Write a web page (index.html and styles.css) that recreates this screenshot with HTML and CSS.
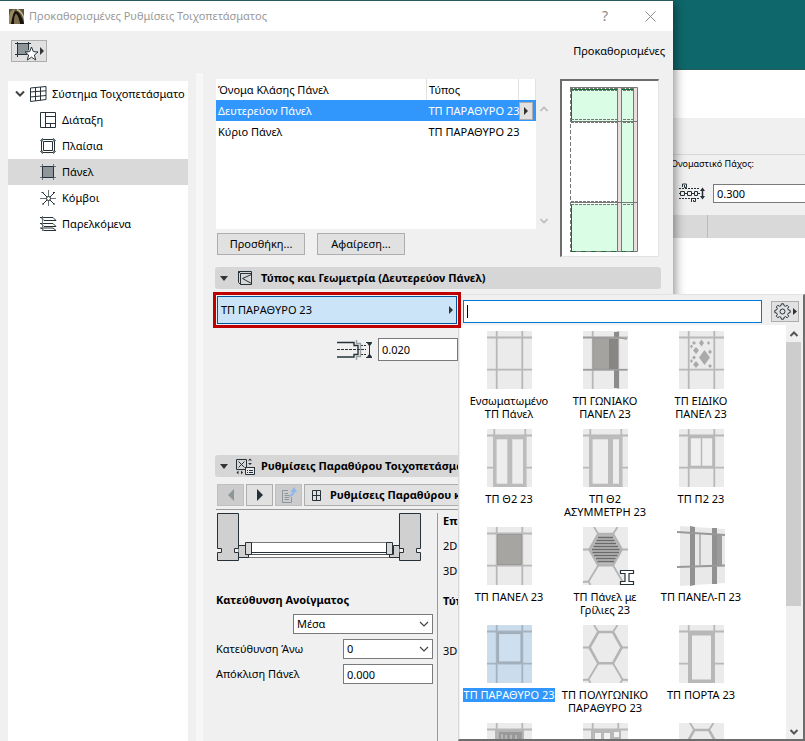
FILE: index.html
```html
<!DOCTYPE html>
<html lang="el">
<head>
<meta charset="utf-8">
<title>Προκαθορισμένες Ρυθμίσεις Τοιχοπετάσματος</title>
<link rel="stylesheet" href="styles.css">
</head>
<body>
<svg class="defs" aria-hidden="true">
  <defs>
    <g id="cell">
      <rect width="45" height="58" fill="#ebebeb"/>
      <path d="M9.7 0V58M35.3 0V58M0 6.5H45M0 38.7H45" stroke="#b8b8b8" stroke-width="1.8"/>
    </g>
    <g id="hex-lines" fill="none" stroke="#b4b4b4" stroke-width="1.8">
      <path d="M11 0L15.3 7M34.5 0L30 7M0 22.5H6.5M38.7 22.5H45M15.3 38.3L5.5 54.5L7.5 58M0 55L5.5 54.5M30 38.3L39.5 54.5L37.5 58M45 55L39.5 54.5"/>
      <path d="M15.3 7H30L38.7 22.5L30 38.3H15.3L6.5 22.5Z" stroke-width="2.6"/>
    </g>
    <g id="door-lines">
      <rect width="45" height="58" fill="#ebebeb"/>
      <path d="M0 6.5H45M0 38.7H6M39 38.7H45M7.3 0V7M38.3 0V7" stroke="#b8b8b8" stroke-width="1.8"/>
      <rect x="7.8" y="8.5" width="30" height="48" fill="#ededed" stroke="#bcbcbc" stroke-width="3.6"/>
    </g>
  </defs>
</svg>

<div class="workspace">
  <header class="app-bar"></header>
  <div class="app-blank"></div>
  <section class="app-info">
    <div class="app-info-top"></div>
    <div class="thickness">
      <label for="thickness">Ονομαστικό Πάχος:</label>
      <div class="thickness-row">
        <svg width="28" height="20" viewBox="0 0 28 20" fill="none" stroke="#263238"><path d="M0 5.5H20M0 15.5H20" stroke-dasharray="2 1"/><path d="M0 10.5H2M6 10.5H9M12 10.5H15M18 10.5H21M3.500 4V1H7.500V4.500H5.500V2M12.500 19V15.500H16.500V18.500H14.500V17"/><path d="M1.500 8.500H5.500V12.500H1.500ZM8.500 8.500H12.500V12.500H8.500ZM15.500 8.500H18.500V12.500H15.500Z"/><path d="M23.500 6V15" stroke-width="1.5"/><path d="M21 8L23.500 4.500L26 8ZM21 13L23.500 16.500L26 13Z" fill="#263238" stroke="none"/></svg>
        <input id="thickness" class="field" value="0.300">
      </div>
    </div>
  </section>
  <div class="app-strip"><span></span><span></span></div>
</div>

<main class="dialog">
  <div class="titlebar">
    <svg width="15" height="15" viewBox="0 0 15 15"><rect width="15" height="15" fill="#5d523a"/><path d="M0 15V7Q1 1 6 0L2 15Z" fill="#978862"/><path d="M2 15Q4 2 7 2Q12 4 15 15H11Q9 5 7 5Q5 6 5 15Z" fill="#17130c"/><path d="M7 1Q13 3 15 12V7Q12 1 9 0Z" fill="#c7b992"/><path d="M5 15Q5 6 7 5Q9 5 11 15Z" fill="#7b6d4e"/></svg>
    <h1>Προκαθορισμένες Ρυθμίσεις Τοιχοπετάσματος</h1>
    <button class="plain help" aria-label="Βοήθεια">?</button>
    <button class="plain close" aria-label="Κλείσιμο"><svg width="11" height="11" viewBox="0 0 11 11"><path d="M.5.5L10.500 10.500M10.500.5L.5 10.500" stroke="#8a8a8a"/></svg></button>
  </div>
  <div class="toolbar">
    <button class="btn favorites" aria-label="Αγαπημένα">
      <svg width="30" height="20" viewBox="0 0 30 20"><path d="M3.500 2.500H14.500V13.500H3.500Z" fill="#8f9699"/><path d="M1 2.500H17M3.500 1V16M1 13.500H13M14.500 1V9" stroke="#263238" fill="none"/><path d="M17.500 6L19.300 10.600L24 11L20.400 14L21.700 19L17.500 16.200L13.300 19L14.600 14L11 11L15.700 10.600Z" fill="#fff" stroke="#263238"/><path d="M26 6L30 10L26 14Z" fill="#333"/></svg>
    </button>
    <span>Προκαθορισμένες</span>
  </div>
  <div class="dialog-body">
    <nav class="tree">
      <a class="node root" href="#">
        <svg width="10" height="8" viewBox="0 0 10 8"><path d="M1 1.500L5 5.500L9 1.500" fill="none" stroke="#444" stroke-width="2"/></svg>
        <svg width="17" height="16" viewBox="0 0 17 16" fill="none" stroke="#263238"><path d="M.5 2L16 .5V13.500L.5 15.500ZM5.500 1.500V15M10.500 1V14.500M0 6L16 4.800M0 11L16 9.500"/></svg>
        <span>Σύστημα Τοιχοπετάσματο</span>
      </a>
      <a class="node" href="#"><svg width="17" height="16" viewBox="0 0 17 16" fill="none" stroke="#263238"><path d="M.5.5H15.500V15.500H.5ZM5.500 .5V15.500M5.500 4.500H15.500M5.500 11.500H15.500M10.500 11.500V15.500"/></svg><span>Διάταξη</span></a>
      <a class="node" href="#"><svg width="17" height="16" viewBox="0 0 17 16" fill="none" stroke="#263238"><path d="M1.500 1.500H14.500V14.500H1.500ZM3.500 3.500H12.500V12.500H3.500Z"/><path d="M0 2.500H2M14 2.500H16M0 13.500H2M14 13.500H16M2.500 0V3.500M13.500 0V3.500M2.500 12.500V16M13.500 12.500V16" stroke="#6c7579"/></svg><span>Πλαίσια</span></a>
      <a class="node current" href="#"><svg width="17" height="16" viewBox="0 0 17 16"><path d="M0 2.500H16M0 13.500H16M2.500 0V16M13.500 0V16" stroke="#6c7579"/><path d="M2.500 2.500H13.500V13.500H2.500Z" fill="#8f9699" stroke="#263238"/></svg><span>Πάνελ</span></a>
      <a class="node" href="#"><svg width="17" height="16" viewBox="0 0 17 16" fill="none" stroke="#263238"><path d="M0 8.500H16M8.500 0V16" stroke="#6c7579"/><path d="M3 3L14 14M14 3L3 14"/><path d="M1.500 2.500H3.500M13 2.500H15M2 14H4M13 14H15"/><circle cx="8.500" cy="8.500" r="2" fill="#fff"/></svg><span>Κόμβοι</span></a>
      <a class="node" href="#"><svg width="17" height="16" viewBox="0 0 17 16" fill="none" stroke="#263238"><path d="M0 1.500H13L16 4.500H4L1 1.500M0 7.500H13L16 10.500H4L1 7.500M0 12H13L16 14.500H4L1 12"/><path d="M2.500 0V15" stroke="#6c7579"/></svg><span>Παρελκόμενα</span></a>
    </nav>
    <div class="splitter"></div>
    <div class="settings">
      <section class="classes">
        <div class="list-side">
          <div class="list-wrap">
            <div class="list-box">
              <table>
                <thead><tr><th class="c-name">Όνομα Κλάσης Πάνελ</th><th class="c-type">Τύπος</th><th class="c-pop"></th></tr></thead>
                <tbody>
                  <tr class="selected"><td>Δευτερεύον Πάνελ</td><td>ΤΠ ΠΑΡΑΘΥΡΟ 23</td><td class="pop"><button class="btn" aria-label="Επιλογή τύπου"><svg width="4" height="8" viewBox="0 0 4 8"><path d="M0 0L4 4L0 8Z" fill="#333"/></svg></button></td></tr>
                  <tr><td>Κύριο Πάνελ</td><td>ΤΠ ΠΑΡΑΘΥΡΟ 23</td><td></td></tr>
                </tbody>
              </table>
            </div>
            <div class="list-scroll">
              <svg width="8" height="6" viewBox="0 0 8 6"><path d="M.5 5L4 1.500L7.500 5" fill="none" stroke="#bbb" stroke-width="1.600"/></svg>
              <svg width="8" height="6" viewBox="0 0 8 6"><path d="M.5 1L4 4.500L7.500 1" fill="none" stroke="#bbb" stroke-width="1.600"/></svg>
            </div>
          </div>
          <div class="list-actions">
            <button class="btn">Προσθήκη...</button>
            <button class="btn">Αφαίρεση...</button>
          </div>
        </div>
        <div class="preview">
          <svg width="68" height="165" viewBox="0 0 68 165">
            <path d="M1 2H47V34H1ZM52 2H64V116H52ZM1 117H47V164H1ZM52 116H64V164H52Z" fill="#dafde5"/>
            <path d="M1.500 2.500V34M1.500 117V164M1 2.500H47M52 2.500H63" stroke="#16732f"/>
            <path d="M1 34.500H64M52 115.500H64" stroke="#16732f" stroke-dasharray="5 3" fill="none"/>
            <path d="M.5 1V165" stroke="#777" stroke-dasharray="4 2"/>
            <path d="M0 1.500H64M1 3.500H64M1 32.500H64M1 35.500H64M1 114.500H47M1 117.500H64" fill="none" stroke="#777" stroke-dasharray="3 1"/>
            <path d="M0 .5H67M0 34.500H67M0 115.500H67M0 164.500H67" stroke="#777"/>
            <path d="M1 164.500H64" stroke="#16732f" stroke-dasharray="5 5"/>
            <path d="M47.500 .5H51.500V164.500H47.500ZM63.500 .5H67.500V164.500H63.500Z" fill="#e9dfdf" stroke="#777"/>
            <path d="M47 34.500H52M63 34.500H68M47 115.500H52M63 115.500H68" stroke="#777"/>
          </svg>
        </div>
      </section>

      <h2 class="section-bar">
        <svg width="8" height="5" viewBox="0 0 8 5"><path d="M0 0H8L4 5Z" fill="#333"/></svg>
        <svg class="sec-icon" width="15" height="15" viewBox="0 0 15 15" fill="none" stroke="#263238"><path d="M.5 .5H13.500V13.500H2.500L.5 11.500ZM2.500 2.500V13.500M2.500 2.500H13.500M.5 .5L2.500 2.500M13.500 3.500L4.500 7.500L13.500 12.500"/></svg>
        <span>Τύπος και Γεωμετρία (Δευτερεύον Πάνελ)</span>
      </h2>

      <div class="type-frame">
        <button class="type-button"><span>ΤΠ ΠΑΡΑΘΥΡΟ 23</span><svg width="4" height="8" viewBox="0 0 4 8"><path d="M0 0L4 4L0 8Z" fill="#333"/></svg></button>
      </div>

      <div class="depth-row">
        <svg width="36" height="20" viewBox="0 0 36 20" fill="none" stroke="#263238"><path d="M1 2.500H18V5.500H22V14.500H18V17H1" stroke-width="1.400"/><path d="M1 9.500H30M24 5.500H30M24 14.500H30" stroke-dasharray="3 1"/><path d="M20.500 0V3.500H24.500V16.500H20.500V20" stroke="#9a9fa2" stroke-width="1.400"/><path d="M30 2.500H36M30 17.500H36M33.500 5V15"/><path d="M31 3H36L33.500 6.500ZM31 17H36L33.500 13.500Z" fill="#263238" stroke="none"/></svg>
        <input class="field" aria-label="Πάχος πάνελ" value="0.020">
      </div>

      <h2 class="section-bar">
        <svg width="8" height="5" viewBox="0 0 8 5"><path d="M0 0H8L4 5Z" fill="#333"/></svg>
        <svg class="sec-icon wide" width="19" height="17" viewBox="0 0 19 17" fill="none" stroke="#263238"><path d="M.5 1.500H10.500V11.500H.5ZM2.500 3.500L8.500 9.500M8.500 3.500L2.500 9.500"/><path d="M12 2.500L14 .5L16 2.500ZM12 5L14 7L16 5ZM2.500 12.500L.5 14.500L2.500 16.500ZM5 12.500L7 14.500L5 16.500Z" fill="#263238" stroke="none"/><path d="M9.500 9.500H18.500V16.500H9.500Z" fill="#e8e8e8"/><path d="M9 9.500H19M11 12.500H12M13 12.500H17M11 14.500H12M13 14.500H17"/></svg>
        <span>Ρυθμίσεις Παραθύρου Τοιχοπετάσμα</span>
      </h2>

      <div class="page-nav">
        <button class="btn off" disabled aria-label="Προηγούμενο"><svg width="6" height="12" viewBox="0 0 6 12"><path d="M6 0V12L0 6Z" fill="#8f9699"/></svg></button>
        <button class="btn" aria-label="Επόμενο"><svg width="6" height="12" viewBox="0 0 6 12"><path d="M0 0V12L6 6Z" fill="#263238"/></svg></button>
        <button class="btn off" disabled aria-label="Επάνω"><svg width="18" height="16" viewBox="0 0 18 16" fill="none"><path d="M8 3.500H2.500V15.500H11.500V10M4.500 6.500H8M4.500 8.500H9M4.500 10.500H9M4.500 12.500H9" stroke="#8f9699"/><path d="M9 9Q14 8 14 3" stroke="#8fb4ee" stroke-width="2"/><path d="M10.500 5L14 0L17 5Z" fill="#8fb4ee"/></svg></button>
        <button class="btn page-name"><svg width="9" height="11" viewBox="0 0 9 11" fill="none" stroke="#263238"><path d="M.5.5H8.500V10.500H.5ZM4.500.5V10.500M.5 5.500H8.500"/></svg><span>Ρυθμίσεις Παραθύρου κ</span></button>
      </div>

      <div class="page">
        <div class="page-left">
          <svg class="plan" width="205" height="49" viewBox="0 0 205 49" stroke="#263238">
            <path d="M30 29.500H174V44.500H30Z" fill="#fff" stroke="#777"/>
            <path d="M34 39.500H170"/><path d="M32 41.500H172" stroke="#555"/>
            <path d="M21.500 32.500H28.500V41.500H31.500V44.500H21.500ZM182.500 32.500H176.500V41.500H172.500V44.500H182.500Z" fill="#d0d0d0"/>
            <path d="M28.500 29.500H34.500V41.500H28.500ZM169.500 29.500H175.500V41.500H169.500Z" fill="#d8d8d8"/>
            <path d="M.5 .5H21.500V47.500H.5V39.500H4.500V35.500H.5Z" fill="#d0d0d0"/>
            <path d="M21.500 35.500H17.500V39.500H21.500" fill="#f0f0f0"/>
            <path d="M182.500 .5H203.500V35.500H199.500V39.500H203.500V47.500H182.500Z" fill="#d0d0d0"/>
            <path d="M182.500 35.500H186.500V39.500H182.500" fill="#f0f0f0"/>
          </svg>
          <h3>Κατεύθυνση Ανοίγματος</h3>
          <div class="form-row opening">
            <div class="select"><select aria-label="Κατεύθυνση Ανοίγματος"><option>Μέσα</option></select><svg width="10" height="6" viewBox="0 0 10 6"><path d="M1 1L5 5L9 1" fill="none" stroke="#444" stroke-width="1.200"/></svg></div>
          </div>
          <div class="form-row">
            <label for="up">Κατεύθυνση Άνω</label>
            <div class="select"><select id="up"><option>0</option></select><svg width="10" height="6" viewBox="0 0 10 6"><path d="M1 1L5 5L9 1" fill="none" stroke="#444" stroke-width="1.200"/></svg></div>
          </div>
          <div class="form-row">
            <label for="offset">Απόκλιση Πάνελ</label>
            <input id="offset" class="field" value="0.000">
          </div>
        </div>
        <div class="page-right">
          <h3>Επι</h3>
          <p>2D</p>
          <p>3D</p>
          <h3>Τύπ</h3>
          <p>3D</p>
        </div>
      </div>
    </div>
  </div>
</main>

<aside class="picker">
  <div class="picker-head">
    <div class="search"><input aria-label="Αναζήτηση" value=""><i></i></div>
    <button class="btn gear" aria-label="Ρυθμίσεις"><svg width="23" height="17" viewBox="0 0 23 17" fill="none" stroke="#263238"><circle cx="8.500" cy="8.500" r="2.500"/><path d="M7 2.600L7.400.8H9.600L10 2.600L11.600 3.300L13.200 2.300L14.700 3.800L13.700 5.400L14.400 7L16.200 7.400V9.600L14.400 10L13.700 11.600L14.700 13.200L13.200 14.700L11.600 13.700L10 14.400L9.600 16.200H7.400L7 14.400L5.400 13.700L3.800 14.700L2.300 13.200L3.300 11.600L2.600 10L.8 9.600V7.400L2.600 7L3.300 5.400L2.300 3.800L3.800 2.300L5.400 3.300Z"/><path d="M19 5L23 8.500L19 12Z" fill="#333" stroke="none"/></svg></button>
  </div>
  <div class="picker-body">
    <ul class="grid">
      <li><a href="#"><span class="pic"><svg width="45" height="58" viewBox="0 0 45 58"><use href="#cell"/></svg></span><b>Ενσωματωμένο ΤΠ Πάνελ</b></a></li>
      <li><a href="#"><span class="pic"><svg width="45" height="58" viewBox="0 0 45 58"><use href="#cell"/><path d="M31 1H36V6H31ZM31 39H36V57H31Z" fill="#8b8b8b"/><path d="M10 7H35V38H10Z" fill="#a4a3a0" stroke="#999"/><path d="M26 8H35V38H26Z" fill="#878684"/><path d="M0 6.500H35L44 8M0 38.700H44" stroke="#9c9c9c" stroke-width="1.600" fill="none"/></svg></span><b>ΤΠ ΓΩΝΙΑΚΟ ΠΑΝΕΛ 23</b></a></li>
      <li><a href="#"><span class="pic"><svg width="45" height="58" viewBox="0 0 45 58"><use href="#cell"/><path d="M25.500 19L31 26.500L25.500 34L20 26.500ZM22.500 8.500L25 12L22.500 15.500L20 12ZM17 16L20 19.500L17 23L14 19.500ZM17 30L20 33.500L17 37L14 33.500ZM15 10L17 12L15 14L13 12ZM29.500 10L31 12L29.500 14L28 12ZM31 18.500L33 21L31 23L29 21ZM12.500 13.500L14 15.500L12.500 17.500L11 15.500ZM15 24.500L17 26.500L15 28.500L13 26.500ZM12.500 28L14 30L12.500 32L11 30ZM31 33L33 35L31 37L29 35Z" fill="#aaa"/></svg></span><b>ΤΠ ΕΙΔΙΚΟ ΠΑΝΕΛ 23</b></a></li>
      <li><a href="#"><span class="pic"><svg width="45" height="58" viewBox="0 0 45 58"><use href="#door-lines"/><path d="M20.300 8H25.300V56H20.300Z" fill="#bcbcbc"/></svg></span><b>ΤΠ Θ2 23</b></a></li>
      <li><a href="#"><span class="pic"><svg width="45" height="58" viewBox="0 0 45 58"><use href="#door-lines"/><path d="M25 8H30V56H25Z" fill="#bcbcbc"/></svg></span><b>ΤΠ Θ2 ΑΣΥΜΜΕΤΡΗ 23</b></a></li>
      <li><a href="#"><span class="pic"><svg width="45" height="58" viewBox="0 0 45 58"><use href="#cell"/><rect x="10.500" y="8" width="24" height="30" fill="#efefef" stroke="#b8b8b8" stroke-width="2.600"/><path d="M22.500 8V38" stroke="#b8b8b8" stroke-width="1.500"/></svg></span><b>ΤΠ Π2 23</b></a></li>
      <li><a href="#"><span class="pic"><svg width="45" height="58" viewBox="0 0 45 58"><use href="#cell"/><rect x="10.500" y="7.500" width="24" height="30" fill="#a6a5a2" stroke="#999"/></svg></span><b>ΤΠ ΠΑΝΕΛ 23</b></a></li>
      <li><a href="#"><span class="pic"><svg width="45" height="58" viewBox="0 0 45 58"><rect width="45" height="58" fill="#ebebeb"/><path d="M15.300 7H30L38.700 22.500L30 38.300H15.300L6.500 22.500Z" fill="#bdbdbd"/><use href="#hex-lines"/><path d="M15 10.500H30M13.500 13.500H31.500M12 16.500H33M10.500 19.500H35M9 22.500H36.500M9.500 25.500H36M11 28.500H34.500M13 31.500H32.500M14.500 34.500H31" stroke="#6a6a6a" stroke-width="1.400"/></svg><svg class="beam" width="16" height="17" viewBox="0 0 16 17"><path d="M1.500 1.500H14.500V4.500H10V12.500H14.500V15.500H1.500V12.500H6V4.500H1.500Z" fill="#fff" stroke="#263238" stroke-width="1.200"/></svg></span><b>ΤΠ Πάνελ με Γρίλιες 23</b></a></li>
      <li><a href="#"><span class="pic"><svg width="49" height="60" viewBox="0 0 49 60"><path d="M3 0L48 3V57L3 60Z" fill="#e9e9e9"/><path d="M13 0L18 1V59L13 60ZM35 2H40V58H35Z" fill="#919191"/><path d="M40 9H45V39H40Z" fill="#9c9c9c"/><path d="M23 8V39" stroke="#aaa" stroke-width="1.500"/><path d="M0 6L48 9M0 41L48 39.500" stroke="#999" stroke-width="2"/></svg></span><b>ΤΠ ΠΑΝΕΛ-Π 23</b></a></li>
      <li class="chosen"><a href="#"><span class="pic"><svg width="45" height="58" viewBox="0 0 45 58"><rect width="45" height="58" fill="#cbdcec"/><path d="M9.700 0V58M35.300 0V58M0 6.500H45M0 38.700H45" stroke="#a5b3c0" stroke-width="1.800"/><rect x="11" y="8" width="23.500" height="29.500" fill="#cedff0" stroke="#a2afbb" stroke-width="2.200"/></svg></span><b>ΤΠ ΠΑΡΑΘΥΡΟ 23</b></a></li>
      <li><a href="#"><span class="pic"><svg width="45" height="58" viewBox="0 0 45 58"><rect width="45" height="58" fill="#ebebeb"/><use href="#hex-lines"/></svg></span><b>ΤΠ ΠΟΛΥΓΩΝΙΚΟ ΠΑΡΑΘΥΡΟ 23</b></a></li>
      <li><a href="#"><span class="pic"><svg width="45" height="58" viewBox="0 0 45 58"><rect width="45" height="58" fill="#ebebeb"/><path d="M0 6.500H45M0 38.700H10M35 38.700H45M9.700 0V7M35.300 0V7" stroke="#b8b8b8" stroke-width="1.800"/><rect x="11" y="8.500" width="23" height="48" fill="#eee" stroke="#b8b8b8" stroke-width="4"/></svg></span><b>ΤΠ ΠΟΡΤΑ 23</b></a></li>
      <li><a href="#"><span class="pic"><svg width="45" height="58" viewBox="0 0 45 58"><use href="#cell"/><path d="M8 7H37V50H8Z" fill="#b5b5b5"/><path d="M12 9H35V50H12Z" fill="#999"/><path d="M15 11V50M19 12V50M24 12V50M29 12V50" stroke="#c0c0c0" stroke-width="1.500"/></svg></span></a></li>
      <li><a href="#"><span class="pic"><svg width="45" height="58" viewBox="0 0 45 58"><use href="#cell"/><path d="M8 7H38V50H8Z" fill="#b8b8b8"/><path d="M12 10H18V50H12ZM21 10H27V50H21ZM31 9H36V14H31Z" fill="#f2f2f2"/></svg></span></a></li>
      <li><a href="#"><span class="pic"><svg width="45" height="58" viewBox="0 0 45 58"><rect width="45" height="58" fill="#ebebeb"/><use href="#hex-lines"/></svg></span></a></li>
    </ul>
    <div class="scrollbar">
      <svg width="10" height="8" viewBox="0 0 10 8"><path d="M1.500 6L5 2.500L8.500 6" fill="none" stroke="#555" stroke-width="2"/></svg>
      <div class="track"><div class="thumb"></div></div>
      <svg width="10" height="8" viewBox="0 0 10 8"><path d="M1.500 2L5 5.500L8.500 2" fill="none" stroke="#555" stroke-width="2"/></svg>
    </div>
  </div>
</aside>
</body>
</html>
```

FILE: styles.css
```css
* { box-sizing: border-box; }

body {
  margin: 0;
  min-height: 100vh;
  position: relative;
  overflow: hidden;
  background: #fff;
  color: #000;
  font: 11px/16px "Noto Sans", "Open Sans", sans-serif;
}

h1, h2, h3, p, ul { margin: 0; padding: 0; font-size: inherit; }
button, input, select { font: inherit; color: inherit; margin: 0; padding: 0; border-radius: 0; }
a { color: inherit; text-decoration: none; }
svg { display: block; flex: none; }
.defs { position: absolute; width: 0; height: 0; }

.btn {
  display: flex;
  align-items: center;
  justify-content: center;
  background: #e1e1e1;
  border: 1px solid #adadad;
}
.field {
  background: #fff;
  border: 1px solid #7a7a7a;
  padding: 0 3px;
  min-width: 0;
}

/* Application window behind the dialog */
.app-bar { height: 70px; background: #0e686b; border-bottom: 1px solid #28595a; }
.app-blank { height: 48px; }
.app-info { height: 97px; background: #f0f0f0; }
.app-info-top { height: 37px; border-bottom: 1px solid #d8d8d8; }
.thickness { width: 134px; margin-left: auto; padding-top: 2px; font-size: 9px; }
.thickness label { display: block; line-height: 14px; white-space: nowrap; }
.thickness-row { display: flex; align-items: center; gap: 6px; padding: 12px 0 0 8px; font-size: 11px; }
.thickness-row .field { flex: 1; height: 19px; border-right: 0; }
.app-strip { display: flex; height: 23px; background: #d9d9d9; }
.app-strip span:first-child { flex: 1; border-right: 1px solid #bbb; }
.app-strip span:last-child { width: 97px; }

/* Dialog window */
.dialog {
  position: absolute;
  inset: 0 132px 0 0;
  display: flex;
  flex-direction: column;
  background: #f0f0f0;
  border-top: 1px solid #28595a;
  box-shadow: 2px 2px 10px rgba(0, 0, 0, .45);
}
.titlebar {
  display: flex;
  align-items: center;
  height: 30px;
  padding: 0 17px 0 9px;
  background: #fff;
  color: #999;
}
.titlebar h1 { flex: 1; margin-left: 5px; font-weight: 400; white-space: nowrap; }
.plain { border: 0; background: none; color: #888; }
.help { width: 12px; margin-right: 34px; font-size: 14px; }
.toolbar { display: flex; justify-content: space-between; align-items: center; height: 40px; margin-bottom: 2px; padding: 0 8px 0 11px; }
.favorites { width: 36px; height: 22px; }

.dialog-body { display: flex; flex: 1; min-height: 0; }
.tree { width: 180px; margin: 8px 8px 0; background: #fff; overflow: hidden; }
.node { display: flex; align-items: center; gap: 5px; height: 26px; padding-left: 32px; white-space: nowrap; }
.node.root { padding-left: 7px; }
.node.current { background: #d9d9d9; }
.splitter { width: 7px; background: #f7f7f7; }
.settings { flex: 1; min-width: 0; padding: 6px 12px 0; }

.classes { display: flex; }
.list-side { flex: 1; min-width: 0; padding-left: 1px; }
.list-wrap { display: flex; height: 150px; }
.list-box { flex: 1; background: #fff; }
table { width: 100%; border-collapse: collapse; table-layout: fixed; }
tr { height: 21px; }
th, td { padding: 0 0 0 2px; text-align: left; font-weight: 400; white-space: nowrap; line-height: 16px; }
th { border-right: 1px solid #e2e2e2; }
.c-type { width: 92px; }
.c-pop { width: 17px; }
.selected { background: #3297fd; color: #fff; }
.pop { padding: 0; }
.pop .btn { width: 14px; height: 18px; }
.list-scroll { display: flex; flex-direction: column; justify-content: space-between; width: 18px; padding: 27px 3px 5px 4px; }
.list-actions { display: flex; gap: 12px; padding: 4px 1px; }
.list-actions .btn { width: 88px; height: 22px; }
.preview {
  width: 99px;
  height: 178px;
  margin-right: 2px;
  margin-left: 6px;
  padding: 6px 0 0 8px;
  background: #fff;
  border: solid;
  border-width: 2px 1px 1px 2px;
  border-color: #6d6d6d #e3e3e3 #e3e3e3 #6d6d6d;
}

.section-bar {
  display: flex;
  align-items: center;
  height: 22px;
  margin-top: 8px;
  padding-left: 5px;
  background: #d6d6d6;
  border-radius: 3px;
  white-space: nowrap;
}
.sec-icon { margin: 0 8px 0 10px; }
.sec-icon.wide { margin: 0 6px 0 8px; }

.type-frame {
  position: relative;
  z-index: 3;
  width: 248px;
  margin: 3px 0 0 -2px;
  padding: 1px;
  background: #f0f0f0;
  border: 3px solid #c00000;
}
.type-button {
  display: flex;
  align-items: center;
  justify-content: space-between;
  width: 100%;
  height: 28px;
  padding: 0 3px;
  background: #cce4f7;
  border: 1px solid #00549a;
}
.depth-row { display: flex; align-items: center; gap: 6px; height: 23px; margin: 10px 0 94px; padding-left: 121px; }
.depth-row .field { width: 80px; height: 23px; }

.page-nav { display: flex; gap: 2px; margin: 7px 0 0 1px; padding: 0 0 3px 1px; border-bottom: 1px solid #999; }
.page-nav .btn { width: 27px; height: 22px; }
.page-nav .off { background: #ccc; border-color: #bfbfbf; }
.page-nav .page-name { flex: 1; justify-content: flex-start; gap: 9px; padding-left: 7px; font-weight: 700; white-space: nowrap; }

.page { display: flex; padding: 3px 0 0 1px; }
.page-left { width: 221px; }
.plan { margin: 0 0 30px 1px; }
.page-left h3 { line-height: 16px; margin-bottom: 6px; }
.form-row { display: flex; align-items: center; justify-content: space-between; height: 20px; margin: 0 4px 5px 0; }
.form-row .field, .select { width: 90px; height: 20px; }
.opening { justify-content: flex-end; }
.opening .select { width: 140px; }
.select { position: relative; }
.select select { appearance: none; width: 100%; height: 100%; padding: 0 3px; background: #fff; border: 1px solid #7a7a7a; }
.select svg { position: absolute; right: 4px; top: 7px; pointer-events: none; }
.page-right { flex: 1; height: 230px; padding-left: 5px; border-left: 1px solid #999; }
.page-right h3, .page-right p { height: 25px; line-height: 15px; }
.page-right h3:nth-of-type(2) { margin-top: 5px; height: 50px; }

/* Object picker menu */
.picker {
  position: absolute;
  z-index: 2;
  inset: 294px 0 0 auto;
  width: 347px;
  display: flex;
  flex-direction: column;
  background: #f0f0f0;
  border: solid;
  border-width: 1px 2px 2px 1px;
  border-color: #e3e3e3 #6d6d6d #6d6d6d #d9d9d9;
}
.picker-head { display: flex; justify-content: space-between; align-items: center; height: 30px; padding: 2px 4px 0; }
.search { position: relative; width: 299px; height: 23px; }
.search input { display: block; width: 100%; height: 100%; padding: 0 4px; background: #fff; border: 1px solid #0078d7; }
.search i { position: absolute; left: 4px; top: 5px; width: 1px; height: 13px; background: #000; }
.gear { width: 28px; height: 21px; }
.picker-body { display: flex; flex: 1; min-height: 0; margin: 0 2px 0 1px; background: #fff; }
.grid {
  flex: 1;
  display: grid;
  grid-template-columns: repeat(3, 96px);
  grid-auto-rows: 98px;
  padding: 3px 0 0 1px;
  overflow: hidden;
  list-style: none;
}
.grid a { display: flex; flex-direction: column; align-items: center; gap: 2px; }
.pic { position: relative; display: flex; align-items: center; justify-content: center; width: 64px; height: 64px; }
.grid b { max-width: 90px; font-weight: 400; line-height: 13px; text-align: center; }
.grid .chosen b { max-width: none; padding: 0 1px 1px; background: #3297fd; color: #fff; white-space: nowrap; }
.beam { position: absolute; right: 2px; bottom: 2px; }
.scrollbar { display: flex; flex-direction: column; align-items: center; width: 15px; padding: 5px 0 3px; background: #f0f0f0; }
.track { flex: 1; width: 100%; padding: 4px 0; }
.thumb { height: 69%; background: #cdcdcd; }
```
